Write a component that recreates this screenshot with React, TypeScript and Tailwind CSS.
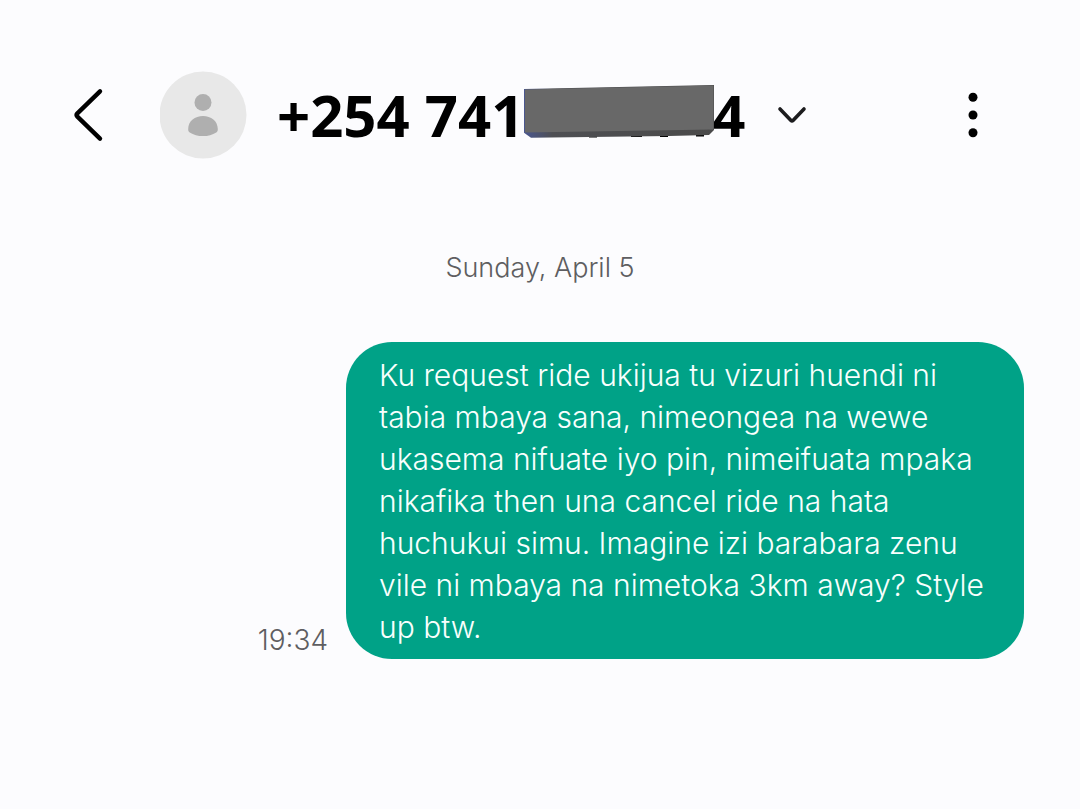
import React from "react";

const message =
  "Ku request ride ukijua tu vizuri huendi ni tabia mbaya sana, nimeongea na wewe ukasema nifuate iyo pin, nimeifuata mpaka nikafika then una cancel ride na hata huchukui simu. Imagine izi barabara zenu vile ni mbaya na nimetoka 3km away? Style up btw.";

function Header() {
  return (
    <header className="flex items-center pr-[94px] pl-[72px] pt-[70px]">
      <button aria-label="Back" className="mr-[56px] flex">
        <svg width="32" height="54" viewBox="0 0 32 54" fill="none" stroke="#000" strokeWidth="4.400" strokeLinecap="round" strokeLinejoin="round">
          <path d="M28 3.400 5.400 25.300Q3.800 27 5.400 28.700L28 50.600" />
        </svg>
      </button>
      <svg width="88" height="90" viewBox="0 0 88 90" className="shrink-0" aria-hidden="true">
        <circle cx="43" cy="45" r="43.500" fill="#e8e8e8" />
        <circle cx="43" cy="32.500" r="8.500" fill="#afafaf" />
        <path d="M28.200 59C28.200 51 35 46 43 46s14.800 5 14.800 13c0 1.800-.2 2.600-1.500 3.400C52.500 64.800 48 66 43 66s-9.500-1.200-13.300-3.600c-1.300-.8-1.500-1.600-1.500-3.400Z" fill="#afafaf" />
      </svg>
      <button aria-label="Contact details" className="ml-[29px] flex items-center">
        <span className="relative flex font-['Noto_Sans','Open_Sans',sans-serif] text-[58px] leading-[88px] font-bold whitespace-nowrap">
          <span>+254 741</span>
          <span className="w-[188px]" />
          <span>4</span>
          <svg className="absolute top-[11px] left-[246px]" width="194" height="60" viewBox="0 0 194 60" aria-hidden="true">
            <defs>
              <linearGradient id="edge">
                <stop offset="0" stopColor="#4a5790" />
                <stop offset="0.150" stopColor="#4e4f53" />
                <stop offset="1" stopColor="#4a4a4a" />
              </linearGradient>
            </defs>
            <path d="M66 50h8v5.500h-8ZM108 50h11v5h-11ZM137 50h8v5h-8ZM173 48h8v6.500h-8Z" fill="#000" />
            <path d="M1 7 191 3v45l-5 5-40 1L8 55.800l-7-5Z" fill="url(#edge)" />
            <path d="M2 7.500 190.500 3.500V47.500L2 50.500Z" fill="#686868" />
          </svg>
        </span>
        <svg className="ml-[30px]" width="32" height="24" viewBox="0 0 32 24" fill="none" stroke="#1c1c1e" strokeWidth="3.600" strokeLinecap="round" strokeLinejoin="round">
          <path d="m4 6 11 11.500q1 1 2 0L28 6" />
        </svg>
      </button>
      <button aria-label="More options" className="ml-auto flex">
        <svg width="26" height="54" viewBox="0 0 26 54" fill="#000">
          <circle cx="13" cy="9.200" r="4.500" />
          <circle cx="13" cy="27" r="4.500" />
          <circle cx="13" cy="44.800" r="4.500" />
        </svg>
      </button>
    </header>
  );
}

export default function App() {
  return (
    <div className="min-h-screen bg-[#fcfcfe] font-['Inter',sans-serif] text-black">
      <Header />
      <main>
        <p className="mt-[88px] text-center text-[27px] leading-[40px] font-light text-[#5e5e61]">Sunday, April 5</p>
        <div className="mt-[54px] mr-[56px] flex items-end justify-end gap-[18px]">
          <time className="text-[28px] leading-[38px] font-light text-[#5e5e61]">19:34</time>
          <p className="max-w-[678px] rounded-[46px] bg-[#00a287] px-[33px] pt-[12px] pb-[11px] text-[30px] leading-[42px] font-light text-[#f8fffd]">
            {message}
          </p>
        </div>
      </main>
    </div>
  );
}
